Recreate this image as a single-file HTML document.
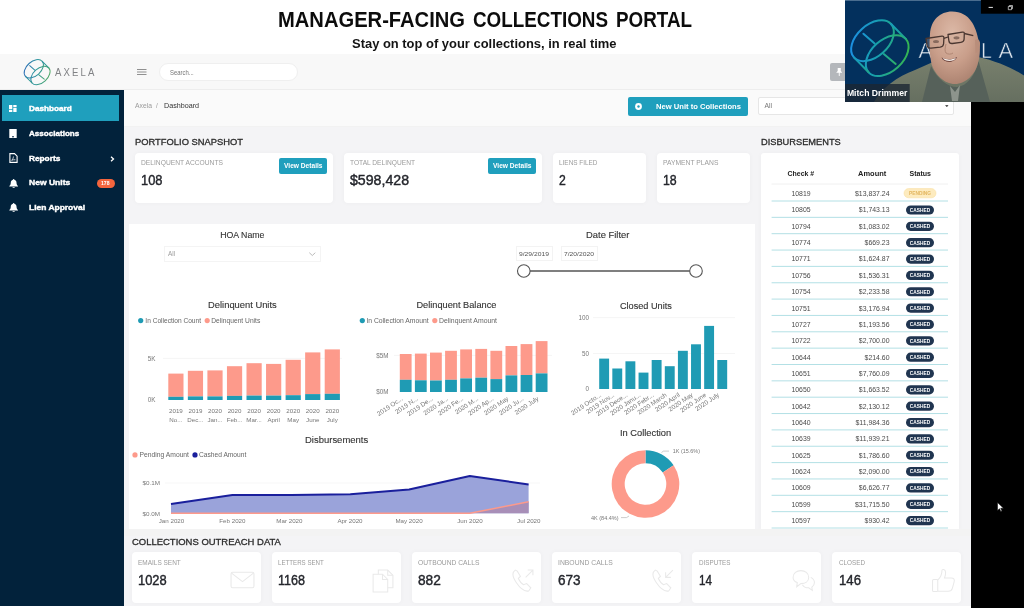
<!DOCTYPE html><html lang='en'><head><meta charset='utf-8'><title>Manager-Facing Collections Portal</title><style>
*{box-sizing:border-box;margin:0;padding:0}
html,body{width:1024px;height:608px;overflow:hidden;background:#fff;font-family:"Liberation Sans", sans-serif}
#stage{position:absolute;left:-8px;top:-8px;width:1040px;height:624px;background:#fff;filter:blur(.4px)}
#inner{position:absolute;left:8px;top:8px;width:1024px;height:608px}
.abs{position:absolute}
.t{position:absolute;white-space:nowrap;line-height:1;transform-origin:0 50%}
#app{left:0;top:54px;width:971px;height:552px;background:#f4f4f6;overflow:hidden}
#topbar{left:0;top:0;width:971px;height:35.500px;background:#f8f8f8;border-bottom:1px solid #ededed}
#sidebar{left:0;top:35.500px;width:124px;height:516.500px;background:#02223b}
#crumbbar{left:124px;top:35.500px;width:847px;height:37.500px;background:#fafafa;border-bottom:1px solid #f2f2f2}
.card{position:absolute;background:#fff;border-radius:4px;box-shadow:0 0 5px rgba(0,0,0,.035)}
.btn{position:absolute;background:#1f9fbd;border-radius:2px}
</style></head><body><div id='stage'><div id='inner'>
<h1 style="position:absolute;left:0;top:0;width:0;height:0;font-size:22px;font-weight:700">
<span class="t" id="ttl1" style="left:278px;top:8.9px;font-size:22px;color:#0c0c0c;font-weight:700;transform:scaleX(0.9162)">MANAGER-FACING</span>
<span class="t" id="ttl2" style="left:473px;top:8.9px;font-size:22px;color:#0c0c0c;font-weight:700;transform:scaleX(0.8562)">COLLECTIONS</span>
<span class="t" id="ttl3" style="left:615.5px;top:8.9px;font-size:22px;color:#0c0c0c;font-weight:700;transform:scaleX(0.8557)">PORTAL</span>
</h1>
<span class="t" id="sub" style="left:352px;top:37.2px;font-size:13.2px;color:#141414;font-weight:700;transform:scaleX(0.9809)">Stay on top of your collections, in real time</span>
<div id="app" class="abs">
<div id="topbar" class="abs">
<svg class="abs" style="left:22px;top:3px" width="30" height="30" viewBox="22 57 30 30">
<defs><linearGradient id="lg1" gradientUnits="userSpaceOnUse" x1="855" y1="25" x2="900" y2="72"><stop offset="0" stop-color="#2d6db8"/><stop offset=".5" stop-color="#2e979c"/><stop offset="1" stop-color="#4ea765"/></linearGradient></defs>
<g transform="translate(37.100 72.250) scale(.45) translate(-879.800 -48.400)" fill="none" stroke="url(#lg1)" stroke-width="2.300" stroke-linecap="round">
<ellipse cx="872.500" cy="40.700" rx="25" ry="15.800" transform="rotate(-42 872.500 40.700)"/>
<ellipse cx="887.200" cy="55.600" rx="25" ry="15.800" transform="rotate(-42 887.200 55.600)"/>
<line x1="891.100" y1="24" x2="905.800" y2="38.900"/><line x1="853.900" y1="57.400" x2="868.600" y2="72.300"/>
<line x1="863.400" y1="33.700" x2="874.600" y2="43.600"/><line x1="883.800" y1="54.100" x2="895.700" y2="63.900"/>
</g></svg>
<span class="t" id="logotxt" style="left:55px;top:12.7px;font-size:10.8px;color:#808285;letter-spacing:2.4px;transform:scaleX(0.8865)">AXELA</span>
<svg class="abs" style="left:136px;top:14px" width="12" height="8" viewBox="0 0 12 8"><g stroke="#909090" stroke-width="1"><line x1="1" y1="1.5" x2="10.5" y2="1.5"/><line x1="1" y1="4" x2="10.5" y2="4"/><line x1="1" y1="6.5" x2="10.5" y2="6.500"/></g></svg>
<div class="abs" style="left:159px;top:9px;width:139px;height:18px;border-radius:9px;background:#fff;border:1px solid #efefef"></div>
<span class="t" id="srch" style="left:170px;top:15.9px;font-size:6.4px;color:#777;transform:scaleX(0.9285)">Search...</span>
<div class="abs" style="left:829.500px;top:8.500px;width:30px;height:18.500px;border-radius:2px;background:#b4b7bb"><svg class="abs" style="left:6.300px;top:5px" width="6.500" height="8.500" viewBox="0 0 8 11"><path d="M2 0h4v4l2 2H0l2-2z M3.400 6h1.200v4L4 11l-.6-1z" fill="#fff"/></svg></div>
</div>
<div id="sidebar" class="abs">
<div class="abs" style="left:1.5px;top:5.500px;width:117.500px;height:25.800px;background:#1f9fbd"></div>
<svg class="abs" style="left:9.400px;top:15.4px" width="7.600" height="7" viewBox="0 0 8 8" preserveAspectRatio="none"><path d="M0 0h3.500v4.500H0zM4.500 0H8v2.500H4.500zM4.500 3.500H8V8H4.500zM0 5.500h3.500V8H0z" fill="#fff"/></svg>
<span class="t" id="nav0" style="left:28.75px;top:15.2px;font-size:7.7px;color:#fff;font-weight:700;transform:scaleX(1.0646);-webkit-text-stroke:.4px #fff">Dashboard</span>
<svg class="abs" style="left:9px;top:39.3px" width="8" height="9.500" viewBox="0 0 8 9.500"><path d="M.3 0h7.400v9.500H.3z" fill="#fff"/><rect x="3" y="7.300" width="2" height="1" fill="#03233f"/></svg>
<span class="t" id="nav1" style="left:28.75px;top:40.95px;font-size:7.7px;color:#fff;font-weight:700;transform:scaleX(1.0500);-webkit-text-stroke:.4px #fff">Associations</span>
<svg class="abs" style="left:8.700px;top:63.5px" width="9" height="10" viewBox="0 0 9 10"><path d="M.9.600h4.600l2.600 2.600v6.200H.9z" fill="none" stroke="#fff" stroke-width="1.100"/><path d="M2.600 7.300c1-.8 1.800-2.200 1.800-3.800M2.600 7.300c1.200-.5 2.400-.7 3.800-.5" stroke="#fff" stroke-width=".8" fill="none"/></svg>
<span class="t" id="nav2" style="left:28.75px;top:65.95px;font-size:7.7px;color:#fff;font-weight:700;transform:scaleX(1.0758);-webkit-text-stroke:.4px #fff">Reports</span>
<svg class="abs" style="left:8.500px;top:89.0px" width="9.300" height="9.300" viewBox="0 0 9 9"><path d="M4.500 0c.5 0 .7.300.7.700C6.700 1.100 7.300 2.300 7.300 3.800c0 1.700.8 2.300 1.400 2.900v.6H.3v-.6C.9 6.100 1.700 5.500 1.700 3.800c0-1.500.6-2.700 2.100-3.100 0-.4.200-.7.700-.7zM3.400 7.900h2.200c0 .6-.5 1.100-1.100 1.100s-1.100-.5-1.100-1.100z" fill="#fff"/></svg>
<span class="t" id="nav3" style="left:28.75px;top:89.7px;font-size:7.7px;color:#fff;font-weight:700;transform:scaleX(1.1097);-webkit-text-stroke:.4px #fff">New Units</span>
<svg class="abs" style="left:8.500px;top:113.5px" width="9.300" height="9.300" viewBox="0 0 9 9"><path d="M4.500 0c.5 0 .7.300.7.700C6.700 1.100 7.300 2.300 7.300 3.800c0 1.700.8 2.300 1.400 2.900v.6H.3v-.6C.9 6.100 1.700 5.500 1.700 3.800c0-1.500.6-2.700 2.100-3.100 0-.4.200-.7.700-.7zM3.400 7.900h2.200c0 .6-.5 1.100-1.100 1.100s-1.100-.5-1.100-1.100z" fill="#fff"/></svg>
<span class="t" id="nav4" style="left:28.75px;top:114.65px;font-size:7.7px;color:#fff;font-weight:700;transform:scaleX(1.0984);-webkit-text-stroke:.4px #fff">Lien Approval</span>
<svg class="abs" style="left:110px;top:66.800px" width="5" height="6" viewBox="0 0 5 6"><path d="M1 .8L3.500 3 1 5.200" stroke="#fff" stroke-width="1.300" fill="none"/></svg>
<div class="abs" style="left:96.500px;top:89.500px;width:18px;height:9px;border-radius:4.500px;background:#f4653d"></div>
<span class="t" id="badge" style="left:101.3px;top:91.5px;font-size:5.4px;color:#fff;font-weight:700;transform:scaleX(0.9444)">178</span>
</div>
<div id="crumbbar" class="abs">
<span class="t" id="cr1" style="left:11px;top:13.8px;font-size:6.4px;color:#9a9a9a;transform:scaleX(1.0625)">Axela</span>
<span class="t" id="cr2" style="left:32px;top:13.8px;font-size:6.4px;color:#9a9a9a">/</span>
<span class="t" id="cr3" style="left:39.5px;top:13.8px;font-size:6.4px;color:#333;transform:scaleX(1.1194)">Dashboard</span>
<div class="btn" style="left:504px;top:7px;width:120px;height:19px"><svg class="abs" style="left:6.500px;top:6px" width="7" height="7" viewBox="0 0 7 7"><circle cx="3.500" cy="3.500" r="3.400" fill="#fff"/><circle cx="3.500" cy="3.500" r="1.200" fill="#1f9fbd"/></svg></div>
<span class="t" id="nbtn" style="left:532px;top:13.2px;font-size:7.2px;color:#fff;font-weight:700;transform:scaleX(1.0590)">New Unit to Collections</span>
<div class="abs" style="left:634px;top:7.500px;width:195.500px;height:18px;background:#fff;border:1px solid #e6e6e6;border-radius:2px"><svg class="abs" style="left:186px;top:6.500px" width="3.600" height="2.400" viewBox="0 0 5 3.500"><path d="M0 0h5L2.500 3.500z" fill="#555"/></svg></div>
<span class="t" id="sel" style="left:640.5px;top:13.2px;font-size:6.8px;color:#777">All</span>
</div>
<span class="t" id="s1" style="left:135.3px;top:83px;font-size:9.4px;color:#2b2b2b;transform:scaleX(0.9983);-webkit-text-stroke:.3px #2b2b2b">PORTFOLIO SNAPSHOT</span>
<span class="t" id="s2" style="left:761px;top:83px;font-size:9.4px;color:#2b2b2b;transform:scaleX(0.9882);-webkit-text-stroke:.3px #2b2b2b">DISBURSEMENTS</span>
<div class="card" style="left:135px;top:98.5px;width:198px;height:50.500px">
<div class="btn" style="left:144px;top:5px;width:47.500px;height:16px"></div>
</div>
<span class="t" id="cl0" style="left:141px;top:105.4px;font-size:7px;color:#9b9b9b;transform:scaleX(0.9552)">DELINQUENT ACCOUNTS</span>
<span class="t" id="cv0" style="left:141px;top:120.1px;font-size:13.8px;color:#24262c;transform:scaleX(0.9335);-webkit-text-stroke:.4px #24262c">108</span>
<span class="t" id="cb0" style="left:284px;top:108.9px;font-size:6.6px;color:#fff;font-weight:700;transform:scaleX(1.0033)">View Details</span>
<div class="card" style="left:343.5px;top:98.5px;width:198.5px;height:50.500px">
<div class="btn" style="left:144.5px;top:5px;width:47.500px;height:16px"></div>
</div>
<span class="t" id="cl1" style="left:349.5px;top:105.4px;font-size:7px;color:#9b9b9b;transform:scaleX(0.9459)">TOTAL DELINQUENT</span>
<span class="t" id="cv1" style="left:349.5px;top:120.1px;font-size:13.8px;color:#24262c;transform:scaleX(1.0253);-webkit-text-stroke:.4px #24262c">$598,428</span>
<span class="t" id="cb1" style="left:493.0px;top:108.9px;font-size:6.6px;color:#fff;font-weight:700;transform:scaleX(1.0033)">View Details</span>
<div class="card" style="left:552.5px;top:98.5px;width:93.5px;height:50.500px">
</div>
<span class="t" id="cl2" style="left:558.5px;top:105.4px;font-size:7px;color:#9b9b9b;transform:scaleX(0.9163)">LIENS FILED</span>
<span class="t" id="cv2" style="left:558.5px;top:120.1px;font-size:13.8px;color:#24262c;transform:scaleX(0.8846);-webkit-text-stroke:.4px #24262c">2</span>
<div class="card" style="left:656.5px;top:98.5px;width:93.5px;height:50.500px">
</div>
<span class="t" id="cl3" style="left:662.5px;top:105.4px;font-size:7px;color:#9b9b9b;transform:scaleX(0.9639)">PAYMENT PLANS</span>
<span class="t" id="cv3" style="left:662.5px;top:120.1px;font-size:13.8px;color:#24262c;transform:scaleX(0.8952);-webkit-text-stroke:.4px #24262c">18</span>
<div class="abs" id="panel" style="left:129px;top:169.5px;width:626px;height:305.500px;background:#fff"></div>
<div class="card" id="dcard" style="left:761px;top:98.5px;width:197.500px;height:377.500px;border-radius:3px 3px 0 0"></div>
<div class="abs" style="left:124px;top:475px;width:847px;height:6.500px;background:#f3f3f3"></div>
<span class="t" id="s3" style="left:131.7px;top:482.8px;font-size:9.4px;color:#2b2b2b;transform:scaleX(1.0089);-webkit-text-stroke:.3px #2b2b2b">COLLECTIONS OUTREACH DATA</span>
<div class="card" style="left:131.7px;top:497.5px;width:129px;height:51px"></div>
<span class="t" id="ol0" style="left:138.2px;top:505.4px;font-size:7px;color:#9b9b9b;transform:scaleX(0.9245)">EMAILS SENT</span>
<span class="t" id="ov0" style="left:138.2px;top:519.7px;font-size:13.8px;color:#24262c;transform:scaleX(0.9348);-webkit-text-stroke:.4px #24262c">1028</span>
<div class="card" style="left:271.8px;top:497.5px;width:129px;height:51px"></div>
<span class="t" id="ol1" style="left:278.3px;top:505.4px;font-size:7px;color:#9b9b9b;transform:scaleX(0.8787)">LETTERS SENT</span>
<span class="t" id="ov1" style="left:278.3px;top:519.7px;font-size:13.8px;color:#24262c;transform:scaleX(0.9100);-webkit-text-stroke:.4px #24262c">1168</span>
<div class="card" style="left:411.8px;top:497.5px;width:129px;height:51px"></div>
<span class="t" id="ol2" style="left:418.3px;top:505.4px;font-size:7px;color:#9b9b9b;transform:scaleX(0.9581)">OUTBOUND CALLS</span>
<span class="t" id="ov2" style="left:418.3px;top:519.7px;font-size:13.8px;color:#24262c;transform:scaleX(0.9900);-webkit-text-stroke:.4px #24262c">882</span>
<div class="card" style="left:551.9px;top:497.5px;width:129px;height:51px"></div>
<span class="t" id="ol3" style="left:558.4px;top:505.4px;font-size:7px;color:#9b9b9b;transform:scaleX(0.9715)">INBOUND CALLS</span>
<span class="t" id="ov3" style="left:558.4px;top:519.7px;font-size:13.8px;color:#24262c;transform:scaleX(0.9813);-webkit-text-stroke:.4px #24262c">673</span>
<div class="card" style="left:692.0px;top:497.5px;width:129px;height:51px"></div>
<span class="t" id="ol4" style="left:698.5px;top:505.4px;font-size:7px;color:#9b9b9b;transform:scaleX(0.8996)">DISPUTES</span>
<span class="t" id="ov4" style="left:698.5px;top:519.7px;font-size:13.8px;color:#24262c;transform:scaleX(0.8464);-webkit-text-stroke:.4px #24262c">14</span>
<div class="card" style="left:832.0px;top:497.5px;width:129px;height:51px"></div>
<span class="t" id="ol5" style="left:838.5px;top:505.4px;font-size:7px;color:#9b9b9b;transform:scaleX(0.9029)">CLOSED</span>
<span class="t" id="ov5" style="left:838.5px;top:519.7px;font-size:13.8px;color:#24262c;transform:scaleX(0.9552);-webkit-text-stroke:.4px #24262c">146</span>
</div>
<svg class="abs" id="charts" style="left:0;top:0" width="1024" height="608" viewBox="0 0 1024 608" font-family='"Liberation Sans", sans-serif'>
<text x="242.3" y="238" font-size="9.600" fill="#333" text-anchor="middle" textLength="44.3" lengthAdjust="spacingAndGlyphs" stroke="#333" stroke-width=".12">HOA Name</text>
<text x="607.7" y="238" font-size="9.600" fill="#333" text-anchor="middle" textLength="43.3" lengthAdjust="spacingAndGlyphs" stroke="#333" stroke-width=".12">Date Filter</text>
<rect x="164.500" y="246.500" width="156" height="15" fill="#fff" stroke="#f4f4f4"/>
<text x="168" y="256.3" font-size="6.4" fill="#9a9a9a">All</text>
<path d="M309.300 252.700l3 2.800 3-2.800" fill="none" stroke="#aaa" stroke-width=".8"/>
<rect x="516.500" y="246.500" width="36" height="14" fill="#fff" stroke="#f3f3f3"/><rect x="561.500" y="246.500" width="36" height="14" fill="#fff" stroke="#f3f3f3"/>
<text x="519" y="255.6" font-size="6" fill="#555" textLength="30" lengthAdjust="spacingAndGlyphs">9/29/2019</text>
<text x="564" y="255.6" font-size="6" fill="#555" textLength="30" lengthAdjust="spacingAndGlyphs">7/20/2020</text>
<line x1="524" y1="271" x2="696" y2="271" stroke="#555" stroke-width="1.300"/>
<circle cx="523.800" cy="271" r="6.300" fill="#fff" stroke="#555" stroke-width="1.100"/><circle cx="696" cy="271" r="6.300" fill="#fff" stroke="#555" stroke-width="1.100"/>
<text x="242.4" y="308.4" font-size="9.600" fill="#333" text-anchor="middle" textLength="68.6" lengthAdjust="spacingAndGlyphs" stroke="#333" stroke-width=".12">Delinquent Units</text>
<circle cx="140.700" cy="320.600" r="2.600" fill="#1f9bb4"/>
<text x="145.3" y="322.9" font-size="6.4" fill="#666" textLength="55.7" lengthAdjust="spacingAndGlyphs">In Collection Count</text>
<circle cx="207.200" cy="320.600" r="2.600" fill="#fd9a8b"/>
<text x="211.3" y="322.9" font-size="6.4" fill="#666" textLength="49" lengthAdjust="spacingAndGlyphs">Delinquent Units</text>
<text x="155.5" y="360.6" font-size="6.3" fill="#777" text-anchor="end">5K</text>
<text x="155.5" y="402.3" font-size="6.3" fill="#777" text-anchor="end">0K</text>
<line x1="163" y1="358.400" x2="342" y2="358.400" stroke="#f1f1f1" stroke-width=".7"/>
<rect x="168.30" y="373.6" width="15.200" height="23.20" fill="#fd9a8b"/><rect x="168.30" y="396.8" width="15.200" height="3.20" fill="#1f9bb4"/>
<text x="175.9" y="413.2" font-size="6.2" fill="#777" text-anchor="middle">2019</text>
<text x="175.9" y="421.8" font-size="6.2" fill="#777" text-anchor="middle">No...</text>
<rect x="187.85" y="370.8" width="15.200" height="25.60" fill="#fd9a8b"/><rect x="187.85" y="396.4" width="15.200" height="3.60" fill="#1f9bb4"/>
<text x="195.45" y="413.2" font-size="6.2" fill="#777" text-anchor="middle">2019</text>
<text x="195.45" y="421.8" font-size="6.2" fill="#777" text-anchor="middle">Dec...</text>
<rect x="207.40" y="370.4" width="15.200" height="26.00" fill="#fd9a8b"/><rect x="207.40" y="396.4" width="15.200" height="3.60" fill="#1f9bb4"/>
<text x="215.0" y="413.2" font-size="6.2" fill="#777" text-anchor="middle">2020</text>
<text x="215.0" y="421.8" font-size="6.2" fill="#777" text-anchor="middle">Jan...</text>
<rect x="226.95" y="366.2" width="15.200" height="29.70" fill="#fd9a8b"/><rect x="226.95" y="395.9" width="15.200" height="4.10" fill="#1f9bb4"/>
<text x="234.55" y="413.2" font-size="6.2" fill="#777" text-anchor="middle">2020</text>
<text x="234.55" y="421.8" font-size="6.2" fill="#777" text-anchor="middle">Feb...</text>
<rect x="246.50" y="363.2" width="15.200" height="32.40" fill="#fd9a8b"/><rect x="246.50" y="395.6" width="15.200" height="4.40" fill="#1f9bb4"/>
<text x="254.1" y="413.2" font-size="6.2" fill="#777" text-anchor="middle">2020</text>
<text x="254.1" y="421.8" font-size="6.2" fill="#777" text-anchor="middle">Mar...</text>
<rect x="266.05" y="363.9" width="15.200" height="31.70" fill="#fd9a8b"/><rect x="266.05" y="395.6" width="15.200" height="4.40" fill="#1f9bb4"/>
<text x="273.65" y="413.2" font-size="6.2" fill="#777" text-anchor="middle">2020</text>
<text x="273.65" y="421.8" font-size="6.2" fill="#777" text-anchor="middle">April</text>
<rect x="285.60" y="359.8" width="15.200" height="35.40" fill="#fd9a8b"/><rect x="285.60" y="395.2" width="15.200" height="4.80" fill="#1f9bb4"/>
<text x="293.2" y="413.2" font-size="6.2" fill="#777" text-anchor="middle">2020</text>
<text x="293.2" y="421.8" font-size="6.2" fill="#777" text-anchor="middle">May</text>
<rect x="305.15" y="352.4" width="15.200" height="41.70" fill="#fd9a8b"/><rect x="305.15" y="394.1" width="15.200" height="5.90" fill="#1f9bb4"/>
<text x="312.75" y="413.2" font-size="6.2" fill="#777" text-anchor="middle">2020</text>
<text x="312.75" y="421.8" font-size="6.2" fill="#777" text-anchor="middle">June</text>
<rect x="324.70" y="349.4" width="15.200" height="44.40" fill="#fd9a8b"/><rect x="324.70" y="393.8" width="15.200" height="6.20" fill="#1f9bb4"/>
<text x="332.3" y="413.2" font-size="6.2" fill="#777" text-anchor="middle">2020</text>
<text x="332.3" y="421.8" font-size="6.2" fill="#777" text-anchor="middle">July</text>
<text x="456.4" y="308.4" font-size="9.600" fill="#333" text-anchor="middle" textLength="80" lengthAdjust="spacingAndGlyphs" stroke="#333" stroke-width=".12">Delinquent Balance</text>
<circle cx="362.300" cy="320.600" r="2.600" fill="#1f9bb4"/>
<text x="366.4" y="322.9" font-size="6.4" fill="#666" textLength="62.2" lengthAdjust="spacingAndGlyphs">In Collection Amount</text>
<circle cx="434.800" cy="320.600" r="2.600" fill="#fd9a8b"/>
<text x="439" y="322.9" font-size="6.4" fill="#666" textLength="58" lengthAdjust="spacingAndGlyphs">Delinquent Amount</text>
<text x="388.5" y="357.7" font-size="6.3" fill="#777" text-anchor="end">$5M</text>
<text x="388.5" y="394.1" font-size="6.3" fill="#777" text-anchor="end">$0M</text>
<line x1="394" y1="355.400" x2="552" y2="355.400" stroke="#f1f1f1" stroke-width=".7"/>
<rect x="399.80" y="354" width="11.800" height="25.80" fill="#fd9a8b"/><rect x="399.80" y="379.8" width="11.800" height="12.20" fill="#1f9bb4"/>
<text x="403.30" y="399.7" font-size="6.400" fill="#777" text-anchor="end" transform="rotate(-34 403.30 399.7)">2019 Oc...</text>
<rect x="414.90" y="353.6" width="11.800" height="26.70" fill="#fd9a8b"/><rect x="414.90" y="380.3" width="11.800" height="11.70" fill="#1f9bb4"/>
<text x="418.40" y="399.7" font-size="6.400" fill="#777" text-anchor="end" transform="rotate(-34 418.40 399.7)">2019 N...</text>
<rect x="430.00" y="352.6" width="11.800" height="27.90" fill="#fd9a8b"/><rect x="430.00" y="380.5" width="11.800" height="11.50" fill="#1f9bb4"/>
<text x="433.50" y="399.7" font-size="6.400" fill="#777" text-anchor="end" transform="rotate(-34 433.50 399.7)">2019 De...</text>
<rect x="445.10" y="350.8" width="11.800" height="29.00" fill="#fd9a8b"/><rect x="445.10" y="379.8" width="11.800" height="12.20" fill="#1f9bb4"/>
<text x="448.60" y="399.7" font-size="6.400" fill="#777" text-anchor="end" transform="rotate(-34 448.60 399.7)">2020 Ja...</text>
<rect x="460.20" y="349.4" width="11.800" height="29.00" fill="#fd9a8b"/><rect x="460.20" y="378.4" width="11.800" height="13.60" fill="#1f9bb4"/>
<text x="463.70" y="399.7" font-size="6.400" fill="#777" text-anchor="end" transform="rotate(-34 463.70 399.7)">2020 Fe...</text>
<rect x="475.30" y="348.9" width="11.800" height="28.80" fill="#fd9a8b"/><rect x="475.30" y="377.7" width="11.800" height="14.30" fill="#1f9bb4"/>
<text x="478.80" y="399.7" font-size="6.400" fill="#777" text-anchor="end" transform="rotate(-34 478.80 399.7)">2020 M...</text>
<rect x="490.40" y="350.8" width="11.800" height="28.30" fill="#fd9a8b"/><rect x="490.40" y="379.1" width="11.800" height="12.90" fill="#1f9bb4"/>
<text x="493.90" y="399.7" font-size="6.400" fill="#777" text-anchor="end" transform="rotate(-34 493.90 399.7)">2020 Ap...</text>
<rect x="505.50" y="346" width="11.800" height="29.40" fill="#fd9a8b"/><rect x="505.50" y="375.4" width="11.800" height="16.60" fill="#1f9bb4"/>
<text x="509.00" y="399.7" font-size="6.400" fill="#777" text-anchor="end" transform="rotate(-34 509.00 399.7)">2020 May</text>
<rect x="520.60" y="344.1" width="11.800" height="30.90" fill="#fd9a8b"/><rect x="520.60" y="375" width="11.800" height="17.00" fill="#1f9bb4"/>
<text x="524.10" y="399.7" font-size="6.400" fill="#777" text-anchor="end" transform="rotate(-34 524.10 399.7)">2020 Ju...</text>
<rect x="535.70" y="341.1" width="11.800" height="32.30" fill="#fd9a8b"/><rect x="535.70" y="373.4" width="11.800" height="18.60" fill="#1f9bb4"/>
<text x="539.20" y="399.7" font-size="6.400" fill="#777" text-anchor="end" transform="rotate(-34 539.20 399.7)">2020 July</text>
<text x="645.9" y="308.6" font-size="9.600" fill="#333" text-anchor="middle" textLength="52" lengthAdjust="spacingAndGlyphs" stroke="#333" stroke-width=".12">Closed Units</text>
<text x="589" y="320" font-size="6.3" fill="#777" text-anchor="end">100</text>
<text x="589" y="356" font-size="6.3" fill="#777" text-anchor="end">50</text>
<text x="589" y="391.3" font-size="6.3" fill="#777" text-anchor="end">0</text>
<line x1="593" y1="317.600" x2="735" y2="317.600" stroke="#f1f1f1" stroke-width=".7"/><line x1="593" y1="353.500" x2="735" y2="353.500" stroke="#f1f1f1" stroke-width=".7"/>
<rect x="599.20" y="358.6" width="9.900" height="30.40" fill="#1f9bb4"/>
<text x="601.70" y="396" font-size="6.400" fill="#777" text-anchor="end" transform="rotate(-34 601.70 396)">2019 Octo...</text>
<rect x="612.32" y="368.5" width="9.900" height="20.50" fill="#1f9bb4"/>
<text x="614.82" y="396" font-size="6.400" fill="#777" text-anchor="end" transform="rotate(-34 614.82 396)">2019 Nov...</text>
<rect x="625.44" y="361.3" width="9.900" height="27.70" fill="#1f9bb4"/>
<text x="627.94" y="396" font-size="6.400" fill="#777" text-anchor="end" transform="rotate(-34 627.94 396)">2019 Dece...</text>
<rect x="638.56" y="372.6" width="9.900" height="16.40" fill="#1f9bb4"/>
<text x="641.06" y="396" font-size="6.400" fill="#777" text-anchor="end" transform="rotate(-34 641.06 396)">2020 Janu...</text>
<rect x="651.68" y="360" width="9.900" height="29.00" fill="#1f9bb4"/>
<text x="654.18" y="396" font-size="6.400" fill="#777" text-anchor="end" transform="rotate(-34 654.18 396)">2020 Febr...</text>
<rect x="664.80" y="366.2" width="9.900" height="22.80" fill="#1f9bb4"/>
<text x="667.30" y="396" font-size="6.400" fill="#777" text-anchor="end" transform="rotate(-34 667.30 396)">2020 March</text>
<rect x="677.92" y="350.8" width="9.900" height="38.20" fill="#1f9bb4"/>
<text x="680.42" y="396" font-size="6.400" fill="#777" text-anchor="end" transform="rotate(-34 680.42 396)">2020 April</text>
<rect x="691.04" y="344.3" width="9.900" height="44.70" fill="#1f9bb4"/>
<text x="693.54" y="396" font-size="6.400" fill="#777" text-anchor="end" transform="rotate(-34 693.54 396)">2020 May</text>
<rect x="704.16" y="325.9" width="9.900" height="63.10" fill="#1f9bb4"/>
<text x="706.66" y="396" font-size="6.400" fill="#777" text-anchor="end" transform="rotate(-34 706.66 396)">2020 June</text>
<rect x="717.28" y="360" width="9.900" height="29.00" fill="#1f9bb4"/>
<text x="719.78" y="396" font-size="6.400" fill="#777" text-anchor="end" transform="rotate(-34 719.78 396)">2020 July</text>
<text x="336.6" y="442.5" font-size="9.600" fill="#333" text-anchor="middle" textLength="63.2" lengthAdjust="spacingAndGlyphs" stroke="#333" stroke-width=".12">Disbursements</text>
<circle cx="135" cy="454.900" r="2.600" fill="#fd9a8b"/>
<text x="139.6" y="457.2" font-size="6.4" fill="#666" textLength="49.4" lengthAdjust="spacingAndGlyphs">Pending Amount</text>
<circle cx="195" cy="454.900" r="2.600" fill="#1a1f9c"/>
<text x="199" y="457.2" font-size="6.4" fill="#666" textLength="47.3" lengthAdjust="spacingAndGlyphs">Cashed Amount</text>
<text x="142.5" y="485.2" font-size="6.2" fill="#777" textLength="17.5" lengthAdjust="spacingAndGlyphs">$0.1M</text>
<text x="142.5" y="516.2" font-size="6.2" fill="#777" textLength="17.5" lengthAdjust="spacingAndGlyphs">$0.0M</text>
<line x1="165" y1="483" x2="540" y2="483" stroke="#f3f3f3" stroke-width=".7"/>
<polygon points="171,513.300 171,504 232.4,495 291.3,495 350.3,494.2 409.1,489.5 469.8,476 528.6,484.5 528.600,513.300" fill="#9aa3da"/>
<polygon points="469.800,513.300 528.600,501.800 528.600,513.300" fill="#a88fb8"/>
<polyline points="171,504 232.4,495 291.3,495 350.3,494.2 409.1,489.5 469.8,476 528.6,484.5" fill="none" stroke="#1a1f9c" stroke-width="2" stroke-linejoin="round"/>
<polyline points="171,513.300 469.800,513.300 528.600,501.800" fill="none" stroke="#fd9a8b" stroke-width="1.500"/>
<text x="171.5" y="523.2" font-size="6.2" fill="#777" text-anchor="middle">Jan 2020</text>
<text x="232.4" y="523.2" font-size="6.2" fill="#777" text-anchor="middle">Feb 2020</text>
<text x="289.4" y="523.2" font-size="6.2" fill="#777" text-anchor="middle">Mar 2020</text>
<text x="350" y="523.2" font-size="6.2" fill="#777" text-anchor="middle">Apr 2020</text>
<text x="409" y="523.2" font-size="6.2" fill="#777" text-anchor="middle">May 2020</text>
<text x="470" y="523.2" font-size="6.2" fill="#777" text-anchor="middle">Jun 2020</text>
<text x="528.8" y="523.2" font-size="6.2" fill="#777" text-anchor="middle">Jul 2020</text>
<text x="645.6" y="436" font-size="9.600" fill="#333" text-anchor="middle" textLength="51.2" lengthAdjust="spacingAndGlyphs" stroke="#333" stroke-width=".12">In Collection</text>
<path d="M645.50 450.20A33.8 33.8 0 0 1 673.59 465.20L662.78 472.43A20.8 20.8 0 0 0 645.50 463.20Z" fill="#1f9bb4"/>
<path d="M673.59 465.20A33.8 33.8 0 1 1 645.50 450.20L645.50 463.20A20.8 20.8 0 1 0 662.78 472.43Z" fill="#fd9a8b"/>
<path d="M661.500 452.500l2-1.400h5.500" fill="none" stroke="#aaa" stroke-width=".6"/>
<text x="672.8" y="453.1" font-size="6" fill="#777" textLength="27.2" lengthAdjust="spacingAndGlyphs">1K (15.6%)</text>
<path d="M629 516l-2.500 1.600h-5.500" fill="none" stroke="#aaa" stroke-width=".6"/>
<text x="591" y="519.9" font-size="6" fill="#777" textLength="27.5" lengthAdjust="spacingAndGlyphs">4K (84.4%)</text>
<text x="787.6" y="176.2" font-size="6.8" fill="#222" font-weight="700" textLength="26.6" lengthAdjust="spacingAndGlyphs">Check #</text>
<text x="858.1" y="176.2" font-size="6.8" fill="#222" font-weight="700" textLength="28.2" lengthAdjust="spacingAndGlyphs">Amount</text>
<text x="909.5" y="176.2" font-size="6.8" fill="#222" font-weight="700" textLength="21.5" lengthAdjust="spacingAndGlyphs">Status</text>
<line x1="771.600" y1="184" x2="948" y2="184" stroke="#ececec" stroke-width=".8"/>
<text x="801" y="195.6" font-size="6.9" fill="#4a4a4a" text-anchor="middle">10819</text>
<text x="889.5" y="195.6" font-size="6.9" fill="#4a4a4a" text-anchor="end">$13,837.24</text>
<rect x="904" y="188.60" width="32" height="9.200" rx="4.600" fill="#fdebbf" stroke="#f8dc9a" stroke-width=".5"/>
<text x="920" y="195.0" font-size="4.8" fill="#e3b65f" text-anchor="middle" font-weight="700">PENDING</text>
<line x1="771.600" y1="201.00" x2="948" y2="201.00" stroke="#aadde2" stroke-width=".9"/>
<text x="801" y="212.4" font-size="6.9" fill="#4a4a4a" text-anchor="middle">10805</text>
<text x="889.5" y="212.4" font-size="6.9" fill="#4a4a4a" text-anchor="end">$1,743.13</text>
<rect x="906" y="205.40" width="28" height="9.200" rx="4.600" fill="#203550"/>
<text x="920" y="211.8" font-size="4.8" fill="#fff" text-anchor="middle" font-weight="700">CASHED</text>
<line x1="771.600" y1="217.35" x2="948" y2="217.35" stroke="#aadde2" stroke-width=".9"/>
<text x="801" y="228.75" font-size="6.9" fill="#4a4a4a" text-anchor="middle">10794</text>
<text x="889.5" y="228.75" font-size="6.9" fill="#4a4a4a" text-anchor="end">$1,083.02</text>
<rect x="906" y="221.75" width="28" height="9.200" rx="4.600" fill="#203550"/>
<text x="920" y="228.15" font-size="4.8" fill="#fff" text-anchor="middle" font-weight="700">CASHED</text>
<line x1="771.600" y1="233.70" x2="948" y2="233.70" stroke="#aadde2" stroke-width=".9"/>
<text x="801" y="245.1" font-size="6.9" fill="#4a4a4a" text-anchor="middle">10774</text>
<text x="889.5" y="245.1" font-size="6.9" fill="#4a4a4a" text-anchor="end">$669.23</text>
<rect x="906" y="238.10" width="28" height="9.200" rx="4.600" fill="#203550"/>
<text x="920" y="244.5" font-size="4.8" fill="#fff" text-anchor="middle" font-weight="700">CASHED</text>
<line x1="771.600" y1="250.05" x2="948" y2="250.05" stroke="#aadde2" stroke-width=".9"/>
<text x="801" y="261.45" font-size="6.9" fill="#4a4a4a" text-anchor="middle">10771</text>
<text x="889.5" y="261.45" font-size="6.9" fill="#4a4a4a" text-anchor="end">$1,624.87</text>
<rect x="906" y="254.45" width="28" height="9.200" rx="4.600" fill="#203550"/>
<text x="920" y="260.85" font-size="4.8" fill="#fff" text-anchor="middle" font-weight="700">CASHED</text>
<line x1="771.600" y1="266.40" x2="948" y2="266.40" stroke="#aadde2" stroke-width=".9"/>
<text x="801" y="277.8" font-size="6.9" fill="#4a4a4a" text-anchor="middle">10756</text>
<text x="889.5" y="277.8" font-size="6.9" fill="#4a4a4a" text-anchor="end">$1,536.31</text>
<rect x="906" y="270.80" width="28" height="9.200" rx="4.600" fill="#203550"/>
<text x="920" y="277.2" font-size="4.8" fill="#fff" text-anchor="middle" font-weight="700">CASHED</text>
<line x1="771.600" y1="282.75" x2="948" y2="282.75" stroke="#aadde2" stroke-width=".9"/>
<text x="801" y="294.15" font-size="6.9" fill="#4a4a4a" text-anchor="middle">10754</text>
<text x="889.5" y="294.15" font-size="6.9" fill="#4a4a4a" text-anchor="end">$2,233.58</text>
<rect x="906" y="287.15" width="28" height="9.200" rx="4.600" fill="#203550"/>
<text x="920" y="293.55" font-size="4.8" fill="#fff" text-anchor="middle" font-weight="700">CASHED</text>
<line x1="771.600" y1="299.10" x2="948" y2="299.10" stroke="#aadde2" stroke-width=".9"/>
<text x="801" y="310.5" font-size="6.9" fill="#4a4a4a" text-anchor="middle">10751</text>
<text x="889.5" y="310.5" font-size="6.9" fill="#4a4a4a" text-anchor="end">$3,176.94</text>
<rect x="906" y="303.50" width="28" height="9.200" rx="4.600" fill="#203550"/>
<text x="920" y="309.9" font-size="4.8" fill="#fff" text-anchor="middle" font-weight="700">CASHED</text>
<line x1="771.600" y1="315.45" x2="948" y2="315.45" stroke="#aadde2" stroke-width=".9"/>
<text x="801" y="326.85" font-size="6.9" fill="#4a4a4a" text-anchor="middle">10727</text>
<text x="889.5" y="326.85" font-size="6.9" fill="#4a4a4a" text-anchor="end">$1,193.56</text>
<rect x="906" y="319.85" width="28" height="9.200" rx="4.600" fill="#203550"/>
<text x="920" y="326.25" font-size="4.8" fill="#fff" text-anchor="middle" font-weight="700">CASHED</text>
<line x1="771.600" y1="331.80" x2="948" y2="331.80" stroke="#aadde2" stroke-width=".9"/>
<text x="801" y="343.2" font-size="6.9" fill="#4a4a4a" text-anchor="middle">10722</text>
<text x="889.5" y="343.2" font-size="6.9" fill="#4a4a4a" text-anchor="end">$2,700.00</text>
<rect x="906" y="336.20" width="28" height="9.200" rx="4.600" fill="#203550"/>
<text x="920" y="342.6" font-size="4.8" fill="#fff" text-anchor="middle" font-weight="700">CASHED</text>
<line x1="771.600" y1="348.15" x2="948" y2="348.15" stroke="#aadde2" stroke-width=".9"/>
<text x="801" y="359.55" font-size="6.9" fill="#4a4a4a" text-anchor="middle">10644</text>
<text x="889.5" y="359.55" font-size="6.9" fill="#4a4a4a" text-anchor="end">$214.60</text>
<rect x="906" y="352.55" width="28" height="9.200" rx="4.600" fill="#203550"/>
<text x="920" y="358.95" font-size="4.8" fill="#fff" text-anchor="middle" font-weight="700">CASHED</text>
<line x1="771.600" y1="364.50" x2="948" y2="364.50" stroke="#aadde2" stroke-width=".9"/>
<text x="801" y="375.9" font-size="6.9" fill="#4a4a4a" text-anchor="middle">10651</text>
<text x="889.5" y="375.9" font-size="6.9" fill="#4a4a4a" text-anchor="end">$7,760.09</text>
<rect x="906" y="368.90" width="28" height="9.200" rx="4.600" fill="#203550"/>
<text x="920" y="375.3" font-size="4.8" fill="#fff" text-anchor="middle" font-weight="700">CASHED</text>
<line x1="771.600" y1="380.85" x2="948" y2="380.85" stroke="#aadde2" stroke-width=".9"/>
<text x="801" y="392.25" font-size="6.9" fill="#4a4a4a" text-anchor="middle">10650</text>
<text x="889.5" y="392.25" font-size="6.9" fill="#4a4a4a" text-anchor="end">$1,663.52</text>
<rect x="906" y="385.25" width="28" height="9.200" rx="4.600" fill="#203550"/>
<text x="920" y="391.65" font-size="4.8" fill="#fff" text-anchor="middle" font-weight="700">CASHED</text>
<line x1="771.600" y1="397.20" x2="948" y2="397.20" stroke="#aadde2" stroke-width=".9"/>
<text x="801" y="408.6" font-size="6.9" fill="#4a4a4a" text-anchor="middle">10642</text>
<text x="889.5" y="408.6" font-size="6.9" fill="#4a4a4a" text-anchor="end">$2,130.12</text>
<rect x="906" y="401.60" width="28" height="9.200" rx="4.600" fill="#203550"/>
<text x="920" y="408.0" font-size="4.8" fill="#fff" text-anchor="middle" font-weight="700">CASHED</text>
<line x1="771.600" y1="413.55" x2="948" y2="413.55" stroke="#aadde2" stroke-width=".9"/>
<text x="801" y="424.95" font-size="6.9" fill="#4a4a4a" text-anchor="middle">10640</text>
<text x="889.5" y="424.95" font-size="6.9" fill="#4a4a4a" text-anchor="end">$11,984.36</text>
<rect x="906" y="417.95" width="28" height="9.200" rx="4.600" fill="#203550"/>
<text x="920" y="424.35" font-size="4.8" fill="#fff" text-anchor="middle" font-weight="700">CASHED</text>
<line x1="771.600" y1="429.90" x2="948" y2="429.90" stroke="#aadde2" stroke-width=".9"/>
<text x="801" y="441.3" font-size="6.9" fill="#4a4a4a" text-anchor="middle">10639</text>
<text x="889.5" y="441.3" font-size="6.9" fill="#4a4a4a" text-anchor="end">$11,939.21</text>
<rect x="906" y="434.30" width="28" height="9.200" rx="4.600" fill="#203550"/>
<text x="920" y="440.7" font-size="4.8" fill="#fff" text-anchor="middle" font-weight="700">CASHED</text>
<line x1="771.600" y1="446.25" x2="948" y2="446.25" stroke="#aadde2" stroke-width=".9"/>
<text x="801" y="457.65" font-size="6.9" fill="#4a4a4a" text-anchor="middle">10625</text>
<text x="889.5" y="457.65" font-size="6.9" fill="#4a4a4a" text-anchor="end">$1,786.60</text>
<rect x="906" y="450.65" width="28" height="9.200" rx="4.600" fill="#203550"/>
<text x="920" y="457.05" font-size="4.8" fill="#fff" text-anchor="middle" font-weight="700">CASHED</text>
<line x1="771.600" y1="462.60" x2="948" y2="462.60" stroke="#aadde2" stroke-width=".9"/>
<text x="801" y="474.0" font-size="6.9" fill="#4a4a4a" text-anchor="middle">10624</text>
<text x="889.5" y="474.0" font-size="6.9" fill="#4a4a4a" text-anchor="end">$2,090.00</text>
<rect x="906" y="467.00" width="28" height="9.200" rx="4.600" fill="#203550"/>
<text x="920" y="473.4" font-size="4.8" fill="#fff" text-anchor="middle" font-weight="700">CASHED</text>
<line x1="771.600" y1="478.95" x2="948" y2="478.95" stroke="#aadde2" stroke-width=".9"/>
<text x="801" y="490.35" font-size="6.9" fill="#4a4a4a" text-anchor="middle">10609</text>
<text x="889.5" y="490.35" font-size="6.9" fill="#4a4a4a" text-anchor="end">$6,626.77</text>
<rect x="906" y="483.35" width="28" height="9.200" rx="4.600" fill="#203550"/>
<text x="920" y="489.75" font-size="4.8" fill="#fff" text-anchor="middle" font-weight="700">CASHED</text>
<line x1="771.600" y1="495.30" x2="948" y2="495.30" stroke="#aadde2" stroke-width=".9"/>
<text x="801" y="506.7" font-size="6.9" fill="#4a4a4a" text-anchor="middle">10599</text>
<text x="889.5" y="506.7" font-size="6.9" fill="#4a4a4a" text-anchor="end">$31,715.50</text>
<rect x="906" y="499.70" width="28" height="9.200" rx="4.600" fill="#203550"/>
<text x="920" y="506.1" font-size="4.8" fill="#fff" text-anchor="middle" font-weight="700">CASHED</text>
<line x1="771.600" y1="511.65" x2="948" y2="511.65" stroke="#aadde2" stroke-width=".9"/>
<text x="801" y="523.05" font-size="6.9" fill="#4a4a4a" text-anchor="middle">10597</text>
<text x="889.5" y="523.05" font-size="6.9" fill="#4a4a4a" text-anchor="end">$930.42</text>
<rect x="906" y="516.05" width="28" height="9.200" rx="4.600" fill="#203550"/>
<text x="920" y="522.45" font-size="4.8" fill="#fff" text-anchor="middle" font-weight="700">CASHED</text>
<line x1="771.600" y1="528.00" x2="948" y2="528.00" stroke="#aadde2" stroke-width=".9"/>
</svg>
<svg class="abs" style="left:230.2px;top:567.500px" width="25" height="25" viewBox="0 0 24 24" fill="none" stroke="#e9e9e9" stroke-width="1"><rect x="1" y="4" width="22" height="15" rx="1.500"/><path d="M1.500 5l10.500 8 10.500-8"/></svg>
<svg class="abs" style="left:370.3px;top:567.500px" width="25" height="25" viewBox="0 0 24 24" fill="none" stroke="#e9e9e9" stroke-width="1"><path d="M3 6h9l5 5v12H3z"/><path d="M12 6v5h5"/><path d="M8 6V2h9l5 5v12h-5"/><path d="M17 2v5h5"/></svg>
<svg class="abs" style="left:510.3px;top:567.500px" width="25" height="25" viewBox="0 0 24 24" fill="none" stroke="#e9e9e9" stroke-width="1"><path d="M5 2c-3 2-3 6 1 12s8 9 12 8l2-3-4-4-3 1c-2-1-4-4-5-6l2-2-3-5z"/><path d="M15 9l7-7M17 2h5v5"/></svg>
<svg class="abs" style="left:650.4px;top:567.500px" width="25" height="25" viewBox="0 0 24 24" fill="none" stroke="#e9e9e9" stroke-width="1"><path d="M5 2c-3 2-3 6 1 12s8 9 12 8l2-3-4-4-3 1c-2-1-4-4-5-6l2-2-3-5z"/><path d="M22 2l-7 7M15 4v5h5"/></svg>
<svg class="abs" style="left:790.5px;top:567.500px" width="25" height="25" viewBox="0 0 24 24" fill="none" stroke="#e9e9e9" stroke-width="1"><path d="M2 9c0-4 3.500-6.500 7.500-6.500S17 5 17 9s-3.500 6-7.500 6l-4 3 .5-4C3.500 13 2 11.500 2 9z"/><path d="M19 9c2 1 3.500 2.500 3.500 5s-1 3.500-2.500 4.500l.5 3-3.500-2.500c-3 0-5-1-6-3"/></svg>
<svg class="abs" style="left:930.5px;top:567.500px" width="25" height="25" viewBox="0 0 24 24" fill="none" stroke="#e9e9e9" stroke-width="1"><path d="M6.500 11.500C9.500 9 10.500 5.500 10.500 2.500 10.500.8 13.800.8 14 4c.1 2-.4 4-1 5.500h6.500c2.500 0 3.300 1.800 2.700 3.800l-1.700 6.200c-.6 2-2 2.800-4 2.800H8c-1 0-1.500-.3-1.500-.8M2.500 11h3c.6 0 1 .4 1 1v9.500c0 .6-.4 1-1 1h-3c-.6 0-1-.4-1-1V12c0-.6.4-1 1-1z"/></svg>
<div class="abs" style="left:971px;top:101.500px;width:53px;height:506.500px;background:#000"></div>
<svg class="abs" style="left:997px;top:502px" width="7" height="10" viewBox="0 0 7 10"><path d="M.5.5v8l2-1.800 1.300 2.800 1.200-.5L3.700 6.200H6.500z" fill="#fff" stroke="#000" stroke-width=".5"/></svg>
<div class="abs" id="video" style="left:845px;top:0;width:179px;height:101.500px;background:#03305d;overflow:hidden">
<svg class="abs" style="left:0;top:0" width="179" height="101.500" viewBox="845 0 179 101.500">
<defs>
<linearGradient id="lg2" gradientUnits="userSpaceOnUse" x1="855" y1="25" x2="900" y2="72"><stop offset="0" stop-color="#1c8fe6"/><stop offset=".5" stop-color="#17a0aa"/><stop offset="1" stop-color="#35b553"/></linearGradient>
<radialGradient id="skin" cx=".45" cy=".3" r=".75"><stop offset="0" stop-color="#dcb9a7"/><stop offset=".55" stop-color="#c99e8a"/><stop offset="1" stop-color="#a9806e"/></radialGradient>
<linearGradient id="shirt" x1="0" y1="0" x2="0" y2="1"><stop offset="0" stop-color="#78806d"/><stop offset="1" stop-color="#666f60"/></linearGradient>
</defs>
<rect x="845" y="0" width="179" height="1" fill="#4a6d8f"/>
<g fill="none" stroke="url(#lg2)" stroke-width="2" stroke-linecap="round">
<ellipse cx="872.500" cy="40.700" rx="25" ry="15.800" transform="rotate(-42 872.500 40.700)"/>
<ellipse cx="887.200" cy="55.600" rx="25" ry="15.800" transform="rotate(-42 887.200 55.600)"/>
<line x1="891.100" y1="24" x2="905.800" y2="38.900"/><line x1="853.900" y1="57.400" x2="868.600" y2="72.300"/>
<line x1="863.400" y1="33.700" x2="874.600" y2="43.600"/><line x1="883.800" y1="54.100" x2="895.700" y2="63.900"/>
</g>
<g font-family='"Liberation Sans", sans-serif' font-size="21.200" fill="#dfe6ee" stroke="#03305d" stroke-width=".5">
<text x="918.500" y="58.100" textLength="14" lengthAdjust="spacingAndGlyphs">A</text>
<text x="981.300" y="58.100" textLength="10.500" lengthAdjust="spacingAndGlyphs">L</text>
<text x="998.400" y="58.100" textLength="14.600" lengthAdjust="spacingAndGlyphs">A</text>
</g>
<path d="M874 102C882 88 897 76.500 915 70L933 62 978 57C995 60.500 1011 67.500 1024 75.500V102Z" fill="url(#shirt)"/>
<path d="M931 66C938 80 948 87 957 87 967 86 975 76 978.500 61L990 102H922Z" fill="#56615a"/>
<path d="M950 86l5 6 5-7-2 16h-6z" fill="#8d948c"/>
<path d="M952 11.500C940 11.500 931 20 930 34 929 44 929.500 55 931.500 64 934.500 74 944 84 955 84 966 84 975.500 74 978 63 980.500 55 980.500 46 978.500 40 976 27 970 11.500 952 11.500Z" fill="url(#skin)"/>
<path d="M975 40c3-2 5.500 0 5 5s-2 8-4.500 8z" fill="#b98e7b"/>
<path d="M941.500 57.500c5 2.500 10.500 2.500 15.500-.5-1.500 5.500-12.500 7-15.500.5z" fill="#5a2f2a"/>
<path d="M942.500 58c4.500 2 9 2 13.500-.3-.8 2.300-3 3.300-6.500 3.300s-5.800-1-7-3z" fill="#f3ece8"/>
<path d="M946 44c-1 4-1.500 7 0 9 2 1.500 5 1.500 7 0" fill="none" stroke="#b08673" stroke-width="1"/>
<ellipse cx="936" cy="41.500" rx="3" ry="1.600" fill="#4b352f" fill-opacity=".75"/><ellipse cx="956.500" cy="37.800" rx="3" ry="1.600" fill="#4b352f" fill-opacity=".75"/>
<g fill="#c9a693" fill-opacity=".3" stroke="#4a3731" stroke-width="1.300" stroke-linejoin="round">
<path d="M926 38.500l16-2.300c1.300-.1 1.900.4 1.900 1.700l-.3 5.800c-.2 2.200-1.300 3.100-3.400 3.400l-9.200 1c-2.200.2-3.500-.7-3.900-2.700z"/>
<path d="M948 34.500l14.300-2.400c1.300-.2 2 .3 2 1.600l-.2 5.500c-.2 2-1.200 2.900-3.200 3.200l-8.500 1.100c-2.200.2-3.200-.7-3.500-2.700z"/>
</g>
<path d="M943.900 38.300l4.100-1.300M964.300 33.500l9 2.200" fill="none" stroke="#4a3731" stroke-width="1.300"/>
<rect x="980.900" y="0" width="43.100" height="13.700" fill="#000"/>
<path d="M988.600 7.400h4.300" stroke="#e6e6e6" stroke-width="1"/><path d="M1008.300 6.500h3.200v3.200h-3.200zM1009.300 6.500v-1h3.200v3.200h-1" stroke="#e6e6e6" stroke-width=".7" fill="none"/>
<rect x="845" y="84" width="64.700" height="18" fill="#1c2733" fill-opacity=".8"/>
<text x="846.900" y="95.900" font-family='"Liberation Sans", sans-serif' font-size="9.500" font-weight="700" fill="#fff" textLength="60.400" lengthAdjust="spacingAndGlyphs">Mitch Drimmer</text>
</svg></div>
<div class="abs" style="left:-8px;top:89.500px;width:8px;height:516.500px;background:#02223b"></div>
<div class="abs" style="left:1024px;top:101px;width:8px;height:515px;background:#000"></div><div class="abs" style="left:971px;top:608px;width:61px;height:8px;background:#000"></div>
<div class="abs" style="left:845px;top:-8px;width:136px;height:8px;background:#03305d"></div><div class="abs" style="left:981px;top:-8px;width:51px;height:8px;background:#000"></div><div class="abs" style="left:1024px;top:0;width:8px;height:14px;background:#000"></div><div class="abs" style="left:1024px;top:14px;width:8px;height:62px;background:#03305d"></div><div class="abs" style="left:1024px;top:76px;width:8px;height:25px;background:#666f60"></div>
</div></div></body></html>
